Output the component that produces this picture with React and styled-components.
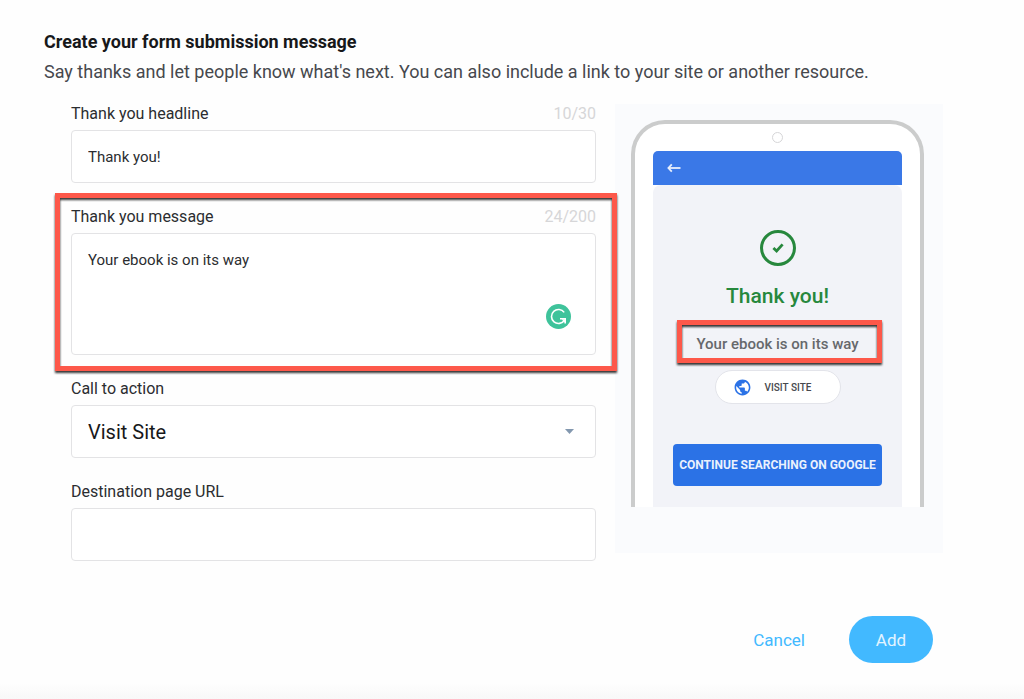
import * as React from 'react';
import styled, {createGlobalStyle, css} from 'styled-components';
import {MdPublic} from 'react-icons/md';

const GlobalStyle = createGlobalStyle`
    * {
        box-sizing: border-box;
    }

    body {
        margin: 0;
        background-color: #fefefe;
        font-family: Roboto, 'Liberation Sans', sans-serif;
        color: #2b2d30;
    }

    button, input, textarea, select {
        font-family: inherit;
    }
`;

const HEADLINE_LIMIT = 30;
const MESSAGE_LIMIT = 200;

const BackArrow = () => (
    <svg width="14" height="10" viewBox="0 0 14 10" fill="none" stroke="#e8effc" strokeWidth="1.8">
        <path d="M13.5 5H2" />
        <path d="M4.8 1.4L1.4 5L4.8 8.6" />
    </svg>
);

const CheckMark = () => (
    <svg width="12" height="10" viewBox="0 0 12 10" fill="none" stroke="#27883d" strokeWidth="2.8">
        <path d="M1.4 5L4.6 8L10.6 1.4" />
    </svg>
);

const GrammarMark = () => (
    <svg width="25" height="25" viewBox="0 0 25 25">
        <circle cx="12.5" cy="12.5" r="12.5" fill="#3fc39b" />
        <path
            d="M18.2 8.4A7 7 0 1 0 18.4 16.2"
            fill="none"
            stroke="#fff"
            strokeWidth="1.6"
        />
        <path d="M14 14.8H19.2V19.4" fill="none" stroke="#fff" strokeWidth="1.6" />
        <path d="M15.6 15.2H19V18.8Z" fill="#fff" />
    </svg>
);

const Caret = () => (
    <svg width="9" height="5" viewBox="0 0 9 5">
        <path d="M0 0H9L4.5 5Z" fill="#8398af" />
    </svg>
);

const App = () => {
    const [headline, setHeadline] = React.useState('Thank you!');
    const [message, setMessage] = React.useState('Your ebook is on its way');
    const [action, setAction] = React.useState('Visit Site');
    const [url, setUrl] = React.useState('');

    return (
        <Page>
            <GlobalStyle />
            <Title>Create your form submission message</Title>
            <Description>
                Say thanks and let people know what's next. You can also include a link to your site or another resource.
            </Description>

            <Content>
                <Form>
                    <Field>
                        <FieldHead>
                            <label htmlFor="headline">Thank you headline</label>
                            <Counter>{headline.length}/{HEADLINE_LIMIT}</Counter>
                        </FieldHead>
                        <Input
                            id="headline"
                            type="text"
                            maxLength={HEADLINE_LIMIT}
                            value={headline}
                            onChange={e => setHeadline(e.target.value)}
                        />
                    </Field>

                    <Field $marked>
                        <FieldHead>
                            <label htmlFor="message">Thank you message</label>
                            <Counter>{message.length}/{MESSAGE_LIMIT}</Counter>
                        </FieldHead>
                        <Control>
                            <TextArea
                                id="message"
                                spellCheck={false}
                                maxLength={MESSAGE_LIMIT}
                                value={message}
                                onChange={e => setMessage(e.target.value)}
                            />
                            <GrammarBadge><GrammarMark /></GrammarBadge>
                        </Control>
                    </Field>

                    <Field>
                        <FieldHead>
                            <label htmlFor="action">Call to action</label>
                        </FieldHead>
                        <Control>
                            <Select id="action" value={action} onChange={e => setAction(e.target.value)}>
                                <option>Visit Site</option>
                                <option>Download</option>
                                <option>Learn More</option>
                            </Select>
                            <SelectArrow><Caret /></SelectArrow>
                        </Control>
                    </Field>

                    <Field>
                        <FieldHead>
                            <label htmlFor="url">Destination page URL</label>
                        </FieldHead>
                        <Input id="url" type="url" value={url} onChange={e => setUrl(e.target.value)} />
                    </Field>
                </Form>

                <Preview>
                    <Phone>
                        <Camera />
                        <PhoneBar>
                            <BackButton type="button" aria-label="Back"><BackArrow /></BackButton>
                        </PhoneBar>
                        <Screen>
                            <CheckCircle><CheckMark /></CheckCircle>
                            <PhoneHeadline>{headline}</PhoneHeadline>
                            <PhoneMessage>{message}</PhoneMessage>
                            <SiteButton type="button">
                                <MdPublic size={19} color="#2b72e6" />
                                {action.toUpperCase()}
                            </SiteButton>
                            <ContinueButton type="button">CONTINUE SEARCHING ON GOOGLE</ContinueButton>
                        </Screen>
                    </Phone>
                </Preview>
            </Content>

            <Footer>
                <CancelButton type="button">Cancel</CancelButton>
                <AddButton type="button">Add</AddButton>
            </Footer>
        </Page>
    );
};

export default App;

const marker = css`
    border: 5px solid #fd584a;
    filter: drop-shadow(0 2px 1px rgba(0, 0, 0, .8));
    pointer-events: none;
`;

const Page = styled.main`
    min-height: 100vh;
    padding: 32px 81px 36px 44px;
    background: linear-gradient(to top, #f8f8f8, #fefefe 16px);
`;

const Title = styled.h1`
    margin: 0;
    font-size: 18px;
    line-height: 20px;
    font-weight: 700;
    color: #17181a;
`;

const Description = styled.p`
    margin: 8px 0 0;
    font-size: 18px;
    line-height: 24px;
    white-space: nowrap;
    color: #46484d;
`;

const Content = styled.div`
    display: grid;
    grid-template-columns: minmax(0, 1fr) 328px;
    gap: 19px;
    align-items: start;
    margin-top: 20px;
`;

const Form = styled.form`
    display: flex;
    flex-direction: column;
    gap: 24px;
    padding-left: 27px;
`;

const Field = styled.div`
    display: flex;
    flex-direction: column;
    gap: 6px;

    ${props => props.$marked && css`
        position: relative;

        &:after {
            content: '';
            position: absolute;
            z-index: 1;
            inset: -14px -21px -16px -16px;
            ${marker}
        }
    `}
`;

const FieldHead = styled.div`
    display: flex;
    justify-content: space-between;
    font-size: 16px;
    line-height: 20px;
`;

const Counter = styled.span`
    color: #d6d6d8;
`;

const Control = styled.div`
    position: relative;
    display: flex;
`;

const box = css`
    width: 100%;
    border: 1px solid #e3e3e5;
    border-radius: 4px;
    background-color: #fff;
    color: #2b2d30;
    outline: none;
`;

const Input = styled.input`
    ${box}
    height: 53px;
    padding: 0 16px;
    font-size: 15px;
`;

const TextArea = styled.textarea`
    ${box}
    height: 122px;
    padding: 16px;
    font-size: 15px;
    line-height: 20px;
    resize: none;
`;

const Select = styled.select`
    ${box}
    height: 53px;
    padding: 0 16px;
    font-size: 20px;
    color: #17181a;
    appearance: none;
`;

const GrammarBadge = styled.span`
    position: absolute;
    right: 25px;
    bottom: 26px;
    display: flex;
`;

const SelectArrow = styled.span`
    position: absolute;
    right: 22px;
    top: 24px;
    display: flex;
    pointer-events: none;
`;

const Preview = styled.aside`
    padding: 16px 19px 46px 16px;
    background-color: #fafbfd;
`;

const Phone = styled.div`
    display: flex;
    flex-direction: column;
    padding: 0 18px;
    border: 4px solid #cbcccc;
    border-bottom: 0;
    border-radius: 34px 34px 0 0;
    background-color: #fff;
`;

const Camera = styled.span`
    align-self: center;
    width: 11px;
    height: 11px;
    margin: 8px 0;
    border: 1px solid #d6d6d8;
    border-radius: 50%;
`;

const PhoneBar = styled.div`
    display: flex;
    align-items: center;
    height: 34px;
    padding-left: 14px;
    border-radius: 5px 5px 0 0;
    background-color: #3a78e7;
`;

const BackButton = styled.button`
    display: flex;
    padding: 0;
    border: 0;
    background: none;
`;

const Screen = styled.div`
    display: flex;
    flex-direction: column;
    align-items: center;
    padding: 45px 20px 21px;
    border-radius: 8px 8px 0 0;
    background-color: #f2f3f8;
`;

const CheckCircle = styled.span`
    display: flex;
    align-items: center;
    justify-content: center;
    width: 36px;
    height: 36px;
    border: 3px solid #27883d;
    border-radius: 50%;
`;

const PhoneHeadline = styled.h2`
    margin: 18px 0 0;
    font-size: 21px;
    line-height: 24px;
    font-weight: 500;
    color: #27883d;
`;

const PhoneMessage = styled.p`
    position: relative;
    margin: 26px 0 0;
    font-size: 15px;
    line-height: 20px;
    font-weight: 500;
    color: #66686c;

    &:after {
        content: '';
        position: absolute;
        inset: -14px -23px -9px -19px;
        ${marker}
    }
`;

const SiteButton = styled.button`
    display: flex;
    align-items: center;
    gap: 13px;
    width: 126px;
    height: 34px;
    margin-top: 16px;
    padding: 0 17px;
    border: 1px solid #e3e4ea;
    border-radius: 17px;
    background-color: #fff;
    color: #46484d;
    font-size: 10px;
    font-weight: 500;
`;

const ContinueButton = styled.button`
    align-self: stretch;
    height: 42px;
    margin-top: 40px;
    padding: 0;
    border: 0;
    border-radius: 4px;
    background-color: #2b72e6;
    color: #eaf1fd;
    font-size: 12px;
    font-weight: 700;
    white-space: nowrap;
`;

const Footer = styled.footer`
    display: flex;
    justify-content: flex-end;
    gap: 44px;
    margin-top: 55px;
    padding-right: 10px;
`;

const CancelButton = styled.button`
    padding: 0;
    border: 0;
    background: none;
    color: #42b9ff;
    font-size: 17px;
`;

const AddButton = styled.button`
    width: 84px;
    height: 47px;
    border: 0;
    border-radius: 24px;
    background-color: #42b9ff;
    color: #e3f4ff;
    font-size: 17px;
`;
